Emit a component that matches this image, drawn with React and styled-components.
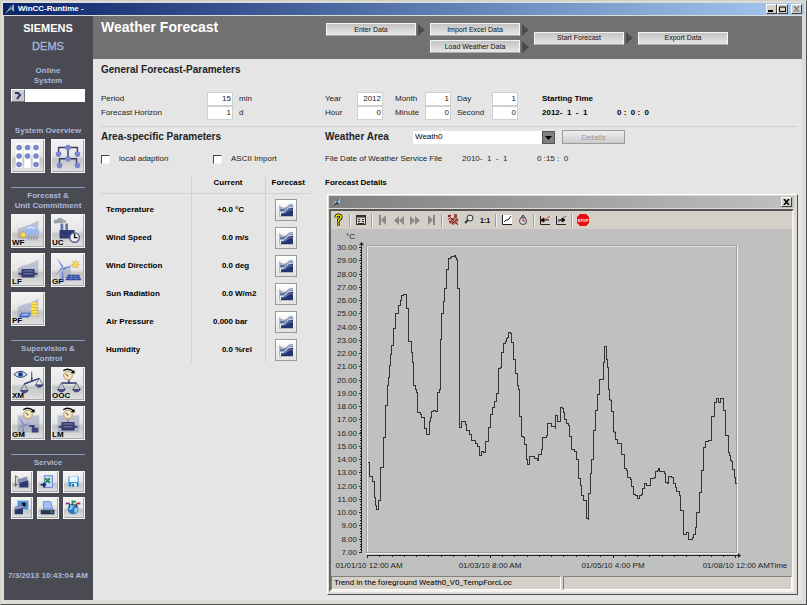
import { useState } from "react";
import styled, { createGlobalStyle } from "styled-components";

const GlobalStyle = createGlobalStyle`
  * { box-sizing: border-box; }
  body {
    margin: 0;
    background: #d4d0c8;
    color: #222;
    font: 8px/12px "Liberation Sans", Arial, sans-serif;
  }
  button, input, select { font: inherit; color: inherit; margin: 0; padding: 0; }
  h1, h2, h3, p { margin: 0; }
  svg { display: block; }
`

/* ---------- window ---------- */

const Window = styled.div`
  display: flex;
  flex-direction: column;
  min-height: 100vh;
  padding: 2px;
  border: 1px solid;
  border-color: #d4d0c8 #505050 #505050 #d4d0c8;
  background: #dedcd7;
`

const TitleBar = styled.header`
  display: flex;
  align-items: center;
  gap: 2px;
  height: 12px;
  padding: 0 2px 0 1px;
  color: #fff;
  font-weight: bold;
  background: linear-gradient(90deg, ${props => props.$from}, ${props => props.$to});
`

const TitleText = styled.span`
  flex: 1;
`

const CaptionButton = styled.button`
  display: grid;
  place-items: center;
  width: 11px;
  height: 10px;
  margin-left: ${props => props.$apart ? 1 : -2}px;
  border: 1px solid;
  border-color: #fff #404040 #404040 #fff;
  background: #d4d0c8;
  color: ${props => props.disabled ? "#808080" : "#000"};
`

const Content = styled.div`
  display: flex;
  flex: 1;
  margin: 1px 2px 2px 1px;
`

/* ---------- sidebar ---------- */

const Sidebar = styled.nav`
  display: flex;
  flex-direction: column;
  flex: none;
  width: 89px;
  padding: 5px 8px 19px 7px;
  background: #4a4a52;
  color: #a9b8dc;
  font-weight: bold;
  line-height: 10px;
  text-align: center;
`

const Brand = styled.div`
  color: #fff;
  font-size: 11px;
  font-weight: 800;
  line-height: 14px;
`

const Product = styled.div`
  margin: 4px 0 13px;
  font-size: 11px;
  font-weight: normal;
  line-height: 14px;
  -webkit-text-stroke: 0.3px #a9b8dc;
`

const StatusField = styled.div`
  display: flex;
  height: 13px;
  margin: 3px 0 24px;
`

const StatusButton = styled.button`
  width: 14px;
  border: 1px solid;
  border-color: #fff #777 #777 #fff;
  background: #c9c9ce;
`

const StatusInput = styled.input`
  flex: 1;
  min-width: 0;
  border: 0;
  background: #fff;
`

const Group = styled.section`
  padding-top: ${props => props.$ruled ? 3 : 0}px;
  border-top: ${props => props.$ruled ? "1px solid #8d9cc0" : "0"};
  margin-bottom: 14px;
`

const GroupTitle = styled.h3`
  font-size: 8px;
  margin: 0 -4px 3px;
`

const Tiles = styled.div`
  display: grid;
  grid-template-columns: repeat(auto-fill, ${props => props.$size}px);
  gap: ${props => props.$size > 30 ? "5px 6px" : "4px"};
`

const Tile = styled.button`
  position: relative;
  width: ${props => props.$size}px;
  height: ${props => props.$size}px;
  border: 1px solid #f4f4f4;
  background: linear-gradient(#f2f2f2, #e6e6e6 50%, #c4c4c4 60%, #e2e2e2);
  box-shadow: inset -1px -1px #a8a8a8;
`

const TileLabel = styled.span`
  position: absolute;
  left: 0;
  bottom: 0;
  color: #000;
  font-weight: bold;
  line-height: 8px;
`

const Clock = styled.time`
  margin: auto -6px 0;
  white-space: nowrap;
`

/* ---------- main ---------- */

const Main = styled.main`
  flex: 1;
  min-width: 0;
  background: #e5e5e5;
`

const PageHeader = styled.div`
  display: flex;
  height: 43px;
  padding: 0 8px;
  background: #727272;
`

const PageTitle = styled.h1`
  width: 225px;
  padding-top: 2px;
  color: #fff;
  font-size: 14px;
  line-height: 18px;
`

const Flow = styled.div`
  display: flex;
  align-items: flex-start;
  gap: 5px;
  padding-top: 7px;
`

const FlowStage = styled.div`
  display: flex;
  flex-direction: column;
  justify-content: ${props => props.$align || "center"};
  gap: 4px;
  height: 30px;
`

const FlowStep = styled.div`
  display: flex;
  align-items: center;
  gap: 2px;
`

const FlowButton = styled.button`
  width: 90px;
  height: 13px;
  border: 1px solid #f4f4f4;
  border-bottom-color: #aaa;
  background: linear-gradient(#c2c2c2, #e8e8e8);
  color: #111;
  font-size: 7px;
  line-height: 10px;
`

const Arrow = styled.i`
  border: 6px solid transparent;
  border-left: 7px solid #4b4b4b;
  border-right: 0;
`

const Body = styled.div`
  padding: 4px 4px 4px 8px;
`

const Heading = styled.h2`
  font-size: 10px;
  line-height: 14px;
  color: #222;
`

const Params = styled.div`
  display: flex;
  margin-top: 15px;
  padding-bottom: 6px;
  border-bottom: 1px solid #d0d0d0;
  line-height: 14px;
`

const Fields = styled.div`
  display: grid;
  grid-template-columns: ${props => props.$columns};
  grid-auto-rows: 14px;
  flex: none;
`

const NumberInput = styled.input`
  width: 26px;
  height: 14px;
  padding: 0 1px;
  border: 1px solid #cfcfcf;
  background: #fff;
  text-align: right;
`

const Unit = styled.span`
  padding-left: 6px;
`

const Starting = styled.div`
  color: #000;
  font-size: 8px;
  font-weight: bold;
  white-space: pre;
`

const Columns = styled.div`
  display: flex;
  padding-top: 3px;
`

const AreaColumn = styled.section`
  flex: none;
  width: 224px;
`

const WeatherColumn = styled.section`
  flex: 1;
  min-width: 0;
`

const Line = styled.div`
  display: flex;
  align-items: center;
  height: ${props => props.$height}px;
  margin-bottom: ${props => props.$after}px;
  white-space: pre;
`

const Check = styled.label`
  display: flex;
  align-items: center;
  gap: 9px;
  width: 112px;
`

const CheckBox = styled.input`
  appearance: none;
  width: 9px;
  height: 9px;
  border: 1px solid;
  border-color: #444 #f4f4f4 #f4f4f4 #444;
  background: #fff;
  &:checked { background: #444; }
`

const Table = styled.table`
  width: 210px;
  table-layout: fixed;
  border-collapse: collapse;
  color: #000;
  font-weight: bold;
`

const Th = styled.th`
  padding: 0 0 4px;
  border-bottom: 1px solid #d0d0d0;
  border-left: ${props => props.$ruled ? "1px solid #d0d0d0" : "0"};
`

const Td = styled.td`
  height: 28px;
  padding: 4px 0 0 ${props => props.$pad || 0}px;
  border-left: ${props => props.$ruled ? "1px solid #d0d0d0" : "0"};
  text-align: ${props => props.$align || "left"};
`

const TrendButton = styled.button`
  display: grid;
  place-items: center;
  width: 22px;
  height: 22px;
  margin-left: 9px;
  border: 1px solid #999;
  background: linear-gradient(#fff, #e2e2e2);
`

const AreaLabel = styled.label`
  width: 88px;
  font-size: 10px;
  font-weight: bold;
`

const SelectWrap = styled.div`
  display: flex;
  width: 142px;
  height: 13px;
  background: #fff;
`

const Select = styled.select`
  appearance: none;
  flex: 1;
  padding-left: 2px;
  border: 0;
  background: #fff url("data:image/svg+xml,%3Csvg xmlns='http://www.w3.org/2000/svg' width='13' height='13'%3E%3Crect x='.5' y='.5' width='12' height='12' fill='%23808080' stroke='%23555'/%3E%3Cpath d='M3 5h7l-3.5 4z'/%3E%3C/svg%3E") no-repeat right;
  color: #000;
`

const DetailsButton = styled.button`
  width: 63px;
  height: 14px;
  margin-left: 7px;
  border: 1px solid #9c9c9c;
  background: linear-gradient(#eee, #cdcdcd);
  color: #999;
  line-height: 11px;
`

const FileDate = styled.span`
  width: ${props => props.$width}px;
`

/* ---------- trend window ---------- */

const TrendWindow = styled.div`
  margin: 0 0 0 2px;
  padding: 1px 3px 2px 1px;
  border: 1px solid;
  border-color: #fff #505050 #505050 #fff;
  background: #dedbd4;
`

const Client = styled.div`
  margin-top: 1px;
  border: 2px solid;
  border-color: #555 #f4f2ec #f4f2ec #666;
  background: #d4d0c8;
`

const Toolbar = styled.div`
  display: flex;
  align-items: center;
  height: 18px;
`

const Tool = styled.button`
  display: grid;
  place-items: center;
  width: 16px;
  height: 16px;
  border: 0;
  background: none;
  color: #888;
`

const Separator = styled.i`
  width: 2px;
  height: 13px;
  margin: 0 2px;
  border-left: 1px solid #a09c94;
  border-right: 1px solid #eee;
`

const Chart = styled.svg`
  width: 100%;
  height: auto;
  background: #c0c0c0;
  font-size: 8px;
  fill: #222;
`

const StatusBar = styled.div`
  display: flex;
  gap: 2px;
  height: 14px;
  color: #000;
`

const StatusCell = styled.div`
  flex: 1;
  padding-left: 2px;
  border: 1px solid;
  border-color: #808080 #fff #fff #808080;
  font-family: Roboto, "Liberation Sans", sans-serif;
  white-space: nowrap;
`

/* ---------- icons ---------- */

const Logo = () => (
    <svg width="12" height="12" viewBox="0 0 12 12">
        <path d="M1 11L6 4L10 1V9L7 7z" fill="#9db1c0"/>
        <path d="M1 11L7 6L10 9L7 8z" fill="#1c2c3a"/>
        <path d="M10 1L7 7L6 4z" fill="#4d7086"/>
    </svg>
)

const Shade = () => <path d="M6 15L13 12L20 10L28 6V25H6z" fill="#8f96b8" opacity=".5"/>

const Gauge = () => (
    <g>
        <circle cx="17" cy="8" r="4.6" fill="#f4e6c3" stroke="#b39552"/>
        <path d="M17 9L15 6" stroke="#333"/>
        <path d="M12 3Q17 -1 23 4" fill="none" stroke="#000" strokeWidth="1.5"/>
        <path d="M24 2V6L20 5z"/>
    </g>
)

const Scales = ({ tilt = 0 }) => (
    <g fill="none" stroke="#323a70">
        <path d={`M10 ${16 + tilt}L26 ${16 - tilt}M18 12V17`} strokeWidth="1.5"/>
        <path d={`M10 ${16 + tilt}L6 ${23 + tilt}M10 ${16 + tilt}L14 ${23 + tilt}M26 ${16 - tilt}L22 ${23 - tilt}M26 ${16 - tilt}L30 ${23 - tilt}`} strokeWidth=".7"/>
        <path d={`M6 ${23 + tilt}H14Q10 ${28 + tilt} 6 ${23 + tilt}M22 ${23 - tilt}H30Q26 ${28 - tilt} 22 ${23 - tilt}`} fill="#4b558f"/>
    </g>
)

const Motor = () => (
    <g fill="#343b6c">
        <rect x="7" y="20" width="20" height="2"/>
        <rect x="10" y="16" width="14" height="9" rx="1"/>
        <path d="M12 18H22M12 21H22" stroke="#8087b2"/>
    </g>
)

const Sun = ({ x, y }) => (
    <g transform={`translate(${x} ${y})`}>
        <path d="M0-5L1-2L4-4L2-1L5 0L2 1L4 4L1 2L0 5L-1 2L-4 4L-2 1L-5 0L-2-1L-4-4L-1-2z" fill="#e69a1c"/>
        <circle r="2.5" fill="#ffdc4a"/>
    </g>
)

const Mill = ({ color }) => (
    <path d="M11 15L10 30H13zM11 15L5 4L12 13zM11 15L22 12L12 17zM11 15L3 24L10 14z" fill={color}/>
)

const bigIcons = {
    list: <g>
        <rect x="4" y="3" width="7" height="27" fill="#fff"/>
        <rect x="13" y="3" width="7" height="27" fill="#fff"/>
        <rect x="22" y="3" width="7" height="27" fill="#fff"/>
        {[7.5, 16.5, 25.5].map(x => [8, 17, 26].map(y =>
            x === 16.5 && y === 26 ? null : <circle key={`${x}-${y}`} cx={x} cy={y} r="3" fill="#7c86cc"/>
        ))}
    </g>,
    net: <g>
        <path d="M17 8H7V15M17 8H27V15M17 8V20M17 20H8V26M17 20H26V26" fill="none" stroke="#343a66" strokeWidth="1.5"/>
        {[[17, 8], [7, 15], [27, 15], [17, 20], [8, 27], [27, 27]].map(([x, y]) =>
            <circle key={`${x}-${y}`} cx={x} cy={y} r="3" fill="#7c86cc"/>
        )}
    </g>,
    WF: <g>
        <Shade/>
        <Sun x={12} y={21}/>
        <path d="M16 21a3 3 0 0 1 0-6a4 4 0 0 1 9 0h1a3 3 0 0 1 0 6z" fill="#9db6ee"/>
        <path d="M17 15a4 4 0 0 1 7 0" fill="none" stroke="#dce6fb" strokeWidth="2"/>
        <path d="M18 23l-1 4M21 23l-1 4M24 23l-1 4M27 23l-1 4" stroke="#6a7191" strokeWidth=".7"/>
    </g>,
    UC: <g>
        <path d="M3 9a2 2 0 0 1 2-4a4 4 0 0 1 7 0q3 0 3 3z" fill="#9aa3a6"/>
        <path d="M9 17V9H12V17M14 17V9H17V17" fill="#6b74a8"/>
        <path d="M8 16H24V25H8z" fill="#30386e"/>
        <circle cx="24" cy="24" r="5" fill="#eee" stroke="#56608c" strokeWidth="1.5"/>
        <path d="M24 20V24H27" fill="none" stroke="#111" strokeWidth="1.5"/>
    </g>,
    LF: <g><Shade/><Motor/></g>,
    GF: <g>
        <path d="M8 16L20 12V26H8z" fill="#a2a6c0" opacity=".6"/>
        <Sun x={25} y={11}/>
        <Mill color="#6482d6"/>
        <path d="M17 22H29L31 28H14z" fill="#2c469e"/>
        <path d="M16 24H30M15 26H31M21 22L20 28M25 22L26 28" stroke="#7d94d8" strokeWidth=".6"/>
    </g>,
    PF: <g>
        <Shade/>
        <path d="M21 10h5v12h-5z" fill="#d9b91f"/>
        <path d="M20 11h6M21 14h6M20 17h6M21 20h6M21 23h6" stroke="#ffe55a" strokeWidth="2"/>
        <path d="M10 21H20L18 26H7z" fill="#4468c4"/>
        <path d="M11 22H18L17 24H10z" fill="#a9c0f2"/>
    </g>,
    XM: <g>
        <path d="M2 7Q9 0 16 7Q9 13 2 7z" fill="#e8f0f8" stroke="#26305a"/>
        <circle cx="9" cy="7" r="3" fill="#4a7cc4"/>
        <circle cx="9" cy="7" r="1.5" fill="#10183c"/>
        <path d="M21 4V11" stroke="#323a70"/>
        <g transform="translate(3 -2)"><Scales tilt={3}/></g>
    </g>,
    OOC: <g><Scales/><Gauge/></g>,
    GM: <g>
        <path d="M6 9H29V27H6z" fill="#8f96b8" opacity=".5"/>
        <g transform="translate(3 7) scale(.8)"><Mill color="#6b7cc0"/></g>
        <path d="M18 19H24V22H28V27H21V21H18z" fill="#39427e"/>
        <Gauge/>
    </g>,
    LM: <g>
        <path d="M6 9H29V27H6z" fill="#8f96b8" opacity=".5"/>
        <Gauge/>
        <path d="M17 13V18" stroke="#56608c"/>
        <Motor/>
    </g>,
}

const smallIcons = {
    trendOut: <g>
        <path d="M4 4V16M2 14H7M4 4L7 7" fill="none" stroke="#555"/>
        <path d="M6 8L17 5V12H6z" fill="#8790ad"/>
        <path d="M8 12L18 9V17H8z" fill="#2c3970"/>
    </g>,
    excel: <g>
        <path d="M7 4H16V17H7z" fill="#c4d5fa" stroke="#6883ca"/>
        <path d="M8 7L13 12M13 7L8 12" stroke="#1e8a3c" strokeWidth="2"/>
        <path d="M3 14H8M6 12L8 14L6 17" fill="none" stroke="#1b2d7a" strokeWidth="2"/>
    </g>,
    save: <g>
        <path d="M5 5H16V16H5z" fill="#2488cf"/>
        <rect x="6" y="5" width="9" height="6" fill="#e9f7ff"/>
        <rect x="8" y="12" width="6" height="4" fill="#d8eef9"/>
        <rect x="9" y="13" width="2" height="3" fill="#195c94"/>
    </g>,
    screen: <g>
        <rect x="6" y="3" width="12" height="10" fill="#4a8ed2" stroke="#b5cbe4"/>
        <path d="M10 10L14 6M11 6H14V9" fill="none" stroke="#000" strokeWidth="1.5"/>
        <path d="M3 10L12 8V18H3z" fill="#283468"/>
        <path d="M3 10L12 8V11L3 13z" fill="#8d96b4"/>
    </g>,
    print: <g>
        <path d="M6 4H14L16 12H6z" fill="#aabffa" stroke="#6f8ad8"/>
        <path d="M3 13H18V18H3z" fill="#28334e"/>
        <path d="M4 13H17" stroke="#8190aa"/>
        <rect x="14" y="15" width="2" height="1" fill="#6be0ff"/>
    </g>,
    globe: <g>
        <circle cx="10" cy="12" r="6" fill="#2a79bd"/>
        <path d="M5 10Q8 6 11 8L9 12L6 13zM11 12L15 10V14L12 17z" fill="#8bd3f0"/>
        <path d="M6 6V11M9 3V9M14 6V10" stroke="#222"/>
        <rect x="2" y="5" width="4" height="2" fill="#7a2ca4"/>
        <rect x="9" y="3" width="4" height="2" fill="#1c8c40"/>
        <rect x="14" y="5" width="4" height="2" fill="#d8252a"/>
    </g>,
}

const ForecastIcon = () => (
    <svg width="16" height="16" viewBox="0 0 16 16">
        <path d="M1.5 3V14.5H15" fill="none" stroke="#b4b9c8"/>
        <path d="M2 4Q6 7 9 4T15 2V9H2z" fill="#a3aecb"/>
        <path d="M2 7Q6 8 9 6T15 4V10H2z" fill="#5c6b9c"/>
        <path d="M3 11L8 10L11 7L15 6V14H3z" fill="#24346f"/>
        <path d="M2 10Q6 11 8 8T15 5" fill="none" stroke="#e8ecf6"/>
        <path d="M3 12Q8 11 10 9T15 8" fill="none" stroke="#8c98c0" strokeWidth=".7"/>
    </svg>
)

const toolIcons = {
    help: <g fill="none">
        <path d="M4 5V4Q4 2 6.500 2T9 4Q9 6 6.500 7V9M5 11H8" stroke="#000" strokeWidth="3"/>
        <path d="M4 5V4Q4 2 6.500 2T9 4Q9 6 6.500 7V9M5.500 11H7.500" stroke="#f5e800" strokeWidth="1.5"/>
    </g>,
    table: <g>
        <rect x="2.5" y="2.5" width="9" height="9" fill="#d4d0c8" stroke="#333"/>
        <path d="M2 3.5H12" stroke="#333" strokeWidth="2"/>
        <path d="M4 6.5H6M8 6.5H10M4 8.5H6M8 8.5H10M4 10.5H10" stroke="#333"/>
    </g>,
    first: <path d="M3 2H5V12H3zM10 2V12L5 7z"/>,
    back: <path d="M7 3V12L2 7.500zM12 3V12L7 7.500z"/>,
    next: <path d="M2 3V12L7 7.500zM7 3V12L12 7.500z"/>,
    last: <path d="M9 2H11V12H9zM4 2V12L9 7z"/>,
    range: <g fill="none" stroke="#8c1d1d">
        <path d="M2 2L12 12M2 6H12M4 10H12M7 5V12"/>
        <path d="M2 4L5 2M8 2H11M8 4H11M9 8L12 7M3 9L6 8" strokeWidth="1.5"/>
    </g>,
    zoom: <g fill="none" stroke="#333">
        <circle cx="8" cy="5" r="3" fill="#d3e3e1"/>
        <path d="M6 7L3 10" strokeWidth="2"/>
    </g>,
    scale: <text x="2" y="10" fontSize="7" fontWeight="bold" fill="#000">1:1</text>,
    trend: <g>
        <rect x="2" y="2" width="10" height="10" fill="#fff"/>
        <path d="M2.5 2V11.500H12M4 9L6 7H8L11 3" fill="none" stroke="#222"/>
    </g>,
    time: <g fill="none" stroke="#444">
        <circle cx="7" cy="8" r="3.5" fill="#dcd5e4"/>
        <path d="M5 5L7 2L9 5" stroke="#333"/>
        <path d="M7 6V8H9" stroke="#a12525"/>
    </g>,
    red: <g fill="none">
        <path d="M2.5 3V11.500H12" stroke="#222"/>
        <path d="M8 6L12 3" stroke="#d22"/>
        <path d="M6 5V9L3 7zM6 7H11" stroke="#111" fill="#111"/>
        <path d="M3 9L5 8" stroke="#d22"/>
    </g>,
    blue: <g fill="none">
        <path d="M2.500 3V11.500H12" stroke="#222"/>
        <path d="M4 9L12 3" stroke="#3458a4"/>
        <path d="M8 5V9L11 7zM4 7H8" stroke="#111" fill="#111"/>
    </g>,
    stop: <g>
        <path d="M4 1H10L13 4V10L10 13H4L1 10V4z" fill="#e80c0c"/>
        <text x="7" y="9" fontSize="4" fontWeight="bold" textAnchor="middle" fill="#fff">STOP</text>
    </g>,
}

const toolGroups = [
    ["help"],
    ["table"],
    ["first", "back", "next", "last"],
    ["range", "zoom", "scale"],
    ["trend", "time"],
    ["red", "blue"],
    ["stop"],
]

/* ---------- data ---------- */

const groups = [
    { title: ["System Overview"], size: 34, icons: ["list", "net"] },
    { title: ["Forecast &", "Unit Commitment"], size: 34, ruled: true, icons: ["WF", "UC", "LF", "GF", "PF"] },
    { title: ["Supervision &", "Control"], size: 34, ruled: true, icons: ["XM", "OOC", "GM", "LM"] },
    { title: ["Service"], size: 22, ruled: true, icons: ["trendOut", "excel", "save", "screen", "print", "globe"] },
]

const parameters = [
    ["Temperature", "+0.0", "°C"],
    ["Wind Speed", "0.0", "m/s"],
    ["Wind Direction", "0.0", "deg"],
    ["Sun Radiation", "0.0", "W/m2"],
    ["Air Pressure", "0.000", "bar"],
    ["Humidity", "0.0", "%rel"],
]

// temperature curve as x,y pairs, three units to one chart pixel
const trend = `127,819 132,862 138,862 142,878 147,925 152,950 154,960 158,960 160,933 166,834 172,834 174,745
178,745 180,650 184,650 187,588 190,565 193,528 197,495 200,468 204,450 206,418 212,374 217,374 221,350 226,335
229,318 235,316 243,318 245,357 251,457 257,457 259,490 262,520 266,590 271,600 273,610 278,670 285,675 290,685
297,690 299,718 304,724 305,735 310,735 312,698 317,685 320,668 325,664 332,667 337,610 343,600 345,450 350,372
354,370 356,337 358,298 363,296 364,242 369,240 371,208 376,205 380,202 388,199 390,205 394,212 396,253 397,298
401,298 403,510 404,715 409,698 416,698 420,705 425,725 432,737 438,753 446,753 450,763 458,772 462,798 467,798
469,787 475,790 480,788 482,757 489,715 495,675 502,655 508,637 515,613 520,597 521,537 526,535 529,490 535,463
541,458 543,447 548,445 550,430 556,433 560,460 566,510 572,552 577,590 581,600 582,683 588,742 594,745 598,765
603,785 605,810 608,825 612,827 614,803 620,803 627,808 638,815 641,795 648,780 653,745 664,740 666,703 674,703
680,712 690,718 692,680 698,697 704,697 706,655 712,657 714,670 718,690 724,703 730,710 733,742 738,765 740,780
748,787 754,810 759,817 761,868 766,890 770,920 775,935 784,938 785,988 790,990 791,912 796,900 797,852 800,810
804,800 806,725 812,665 818,615 823,572 829,570 835,565 835,520 838,472 844,472 845,510 846,535 851,600 852,630
857,635 859,667 864,728 869,730 871,752 876,755 878,762 889,763 890,795 897,838 905,845 908,865 915,870 918,893
925,915 932,918 938,928 942,918 949,915 951,898 959,882 965,890 975,885 977,868 988,865 990,848 998,845 999,838
1004,848 1017,852 1022,872 1022,880 1027,882 1029,862 1038,865 1045,882 1052,895 1055,908 1062,920 1067,965
1073,965 1074,1037 1080,1037 1083,1030 1087,1030 1089,1052 1095,1050 1103,1045 1106,1035 1110,1015 1115,970
1122,910 1128,845 1134,775 1140,770 1142,758 1150,755 1159,755 1160,682 1167,640 1173,635 1175,628 1180,640
1185,640 1187,628 1192,628 1194,665 1200,668 1202,738 1207,740 1209,790 1214,800 1215,815 1220,817 1222,840
1227,843 1229,865 1231,882 1235,882`

const trendPath = trend.split(/\s+/).map((pair, index) => {
    const [x, y] = pair.split(",").map(Number)
    const px = Math.floor(x / 3) - 5.5
    const py = Math.floor(y / 3) - 39.5
    return index ? `H${px}V${py}` : `M${px} ${py}`
}).join("")

const timeLabels = [
    [38, "01/01/10 12:00 AM"],
    [159, "01/03/10 8:00 AM"],
    [282, "01/05/10 4:00 PM"],
    [414, "01/08/10 12:00 AMTime"],
]

/* ---------- parts ---------- */

const MenuGroup = ({ group }) => (
    <Group $ruled={group.ruled}>
        <GroupTitle>{group.title.map(line => <div key={line}>{line}</div>)}</GroupTitle>
        <Tiles $size={group.size}>
            {group.icons.map(name =>
                <Tile key={name} $size={group.size} aria-label={name}>
                    <svg width="100%" height="100%" viewBox={group.size > 30 ? "0 0 34 34" : "0 0 22 22"}>
                        {bigIcons[name] || smallIcons[name]}
                    </svg>
                    {name === name.toUpperCase() && <TileLabel>{name}</TileLabel>}
                </Tile>
            )}
        </Tiles>
    </Group>
)

const Field = ({ label, value, unit }) => {
    const id = label.toLowerCase().replace(" ", "-")
    return (
        <>
            <label htmlFor={id}>{label}</label>
            <NumberInput id={id} defaultValue={value}/>
            <Unit>{unit}</Unit>
        </>
    )
}

const Close = () => (
    <svg width="7" height="6" viewBox="0 0 7 6">
        <path d="M1 0L6 6M6 0L1 6" stroke="currentColor" strokeWidth="1.5"/>
    </svg>
)

const ParameterTable = () => (
    <Table>
        <colgroup>
            <col width="90"/>
            <col width="42"/>
            <col width="32"/>
            <col width="46"/>
        </colgroup>
        <thead>
            <tr>
                <Th/>
                <Th $ruled colSpan={2}>Current</Th>
                <Th $ruled>Forecast</Th>
            </tr>
        </thead>
        <tbody>
            {parameters.map(([name, value, unit]) =>
                <tr key={name}>
                    <Td $pad={5}>{name}</Td>
                    <Td $ruled $align="right">{value}</Td>
                    <Td $pad={2}>{unit}</Td>
                    <Td $ruled><TrendButton aria-label={`${name} forecast`}><ForecastIcon/></TrendButton></Td>
                </tr>
            )}
        </tbody>
    </Table>
)

const TrendChart = () => (
    <Chart viewBox="0 0 461 347">
        <g fill="none" shapeRendering="crispEdges">
            <path d="M35.5 324.5V16.5H406" stroke="#a2a2a2"/>
            <path d="M36.5 324V17.5H405" stroke="#e4e4e4"/>
            <path d="M405.5 17V323.5H36" stroke="#a2a2a2"/>
            <path d="M406.5 16V324.5H35" stroke="#eee"/>
            <path d="M30.5 14V323M36 326.5H409" stroke="#222"/>
            <path d="M29.5 18V323" stroke="#222" strokeDasharray="1 1.65"/>
            {Array.from({ length: 24 }, (_, i) =>
                <path key={i} d={`M28 ${Math.round(18 + i * 13.25)}.5H31`} stroke="#222"/>
            )}
            {Array.from({ length: 31 }, (_, i) =>
                <path key={i} d={`M${Math.round(36 + i * 12.28)}.5 326V${i % 10 ? 328 : 329}`} stroke="#222"/>
            )}
            <path d={trendPath} stroke="#333"/>
        </g>
        <path d="M30.5 13L33 16H28zM410 326.5L407 324V329z"/>
        <text x="15" y="10">°C</text>
        {Array.from({ length: 24 }, (_, i) =>
            <text key={i} x="26" y={Math.round(21 + i * 13.25)} textAnchor="end">{(30 - i).toFixed(2)}</text>
        )}
        {timeLabels.map(([x, label]) =>
            <text key={label} x={x} y="339" textAnchor="middle">{label}</text>
        )}
    </Chart>
)

const Trend = () => (
    <TrendWindow>
        <TitleBar $from="#808080" $to="#c0c0c0">
            <Logo/>
            <TitleText/>
            <CaptionButton $apart aria-label="Close trend"><Close/></CaptionButton>
        </TitleBar>
        <Client>
            <Toolbar>
                {toolGroups.map((group, index) => [
                    index > 0 && <Separator key={`separator-${index}`}/>,
                    ...group.map(name =>
                        <Tool key={name} aria-label={name}>
                            <svg width="14" height="14" viewBox="0 0 14 14" fill="currentColor">
                                {toolIcons[name]}
                            </svg>
                        </Tool>
                    ),
                ])}
            </Toolbar>
            <TrendChart/>
            <StatusBar>
                <StatusCell>Trend in the foreground Weath0_V0_TempForcLoc</StatusCell>
                <StatusCell/>
            </StatusBar>
        </Client>
    </TrendWindow>
)

const App = () => {
    const [area, setArea] = useState("Weath0")

    return (
        <Window>
            <GlobalStyle/>
            <TitleBar $from="#0a246a" $to="#a6caf0">
                <Logo/>
                <TitleText>WinCC-Runtime -</TitleText>
                <CaptionButton aria-label="Minimize">
                    <svg width="7" height="6"><path d="M0 5H5" stroke="#000" strokeWidth="2"/></svg>
                </CaptionButton>
                <CaptionButton aria-label="Maximize">
                    <svg width="7" height="6"><path d="M.5 1H6.500V5.500H.5z" fill="none" stroke="#000"/></svg>
                </CaptionButton>
                <CaptionButton $apart disabled aria-label="Close"><Close/></CaptionButton>
            </TitleBar>
            <Content>
                <Sidebar>
                    <Brand>SIEMENS</Brand>
                    <Product>DEMS</Product>
                    <label htmlFor="status">Online<br/>System</label>
                    <StatusField>
                        <StatusButton aria-label="Acknowledge">
                            <svg width="12" height="11" viewBox="0 0 12 11">
                                <path d="M3 3H6L8 5L5 9" fill="none" stroke="#27346a" strokeWidth="2"/>
                            </svg>
                        </StatusButton>
                        <StatusInput id="status"/>
                    </StatusField>
                    {groups.map(group => <MenuGroup key={group.title[0]} group={group}/>)}
                    <Clock>7/3/2013 10:43:04 AM</Clock>
                </Sidebar>
                <Main>
                    <PageHeader>
                        <PageTitle>Weather Forecast</PageTitle>
                        <Flow>
                            <FlowStage $align="flex-start">
                                <FlowStep><FlowButton>Enter Data</FlowButton><Arrow/></FlowStep>
                            </FlowStage>
                            <FlowStage>
                                <FlowStep><FlowButton>Import Excel Data</FlowButton><Arrow/></FlowStep>
                                <FlowStep><FlowButton>Load Weather Data</FlowButton><Arrow/></FlowStep>
                            </FlowStage>
                            <FlowStage>
                                <FlowStep><FlowButton>Start Forecast</FlowButton><Arrow/></FlowStep>
                            </FlowStage>
                            <FlowStage>
                                <FlowButton>Export Data</FlowButton>
                            </FlowStage>
                        </Flow>
                    </PageHeader>
                    <Body>
                        <Heading>General Forecast-Parameters</Heading>
                        <Params>
                            <Fields $columns="106px 26px 92px">
                                <Field label="Period" value="15" unit="min"/>
                                <Field label="Forecast Horizon" value="1" unit="d"/>
                            </Fields>
                            <Fields $columns="32px 26px 12px 30px 26px 6px 35px 26px 24px">
                                <Field label="Year" value="2012"/>
                                <Field label="Month" value="1"/>
                                <Field label="Day" value="1"/>
                                <Field label="Hour" value="0"/>
                                <Field label="Minute" value="0"/>
                                <Field label="Second" value="0"/>
                            </Fields>
                            <Starting>
                                <div>Starting Time</div>
                                <Line $height={14} $after={0}>
                                    <FileDate $width={75}>2012-  1  -  1</FileDate>
                                    <span>0 :  0 :  0</span>
                                </Line>
                            </Starting>
                        </Params>
                        <Columns>
                            <AreaColumn>
                                <Line $height={14} $after={9}><Heading>Area-specific Parameters</Heading></Line>
                                <Line $height={12} $after={12}>
                                    <Check><CheckBox type="checkbox"/>local adaption</Check>
                                    <Check><CheckBox type="checkbox"/>ASCII Import</Check>
                                </Line>
                                <ParameterTable/>
                            </AreaColumn>
                            <WeatherColumn>
                                <Line $height={14} $after={9}>
                                    <AreaLabel htmlFor="area">Weather Area</AreaLabel>
                                    <SelectWrap>
                                        <Select id="area" value={area} onChange={event => setArea(event.target.value)}>
                                            <option>Weath0</option>
                                        </Select>
                                    </SelectWrap>
                                    <DetailsButton disabled>Details</DetailsButton>
                                </Line>
                                <Line $height={12} $after={12}>
                                    <FileDate $width={137}>File Date of Weather Service File</FileDate>
                                    <FileDate $width={75}>2010-  1  -  1</FileDate>
                                    <span>0 :15 :  0</span>
                                </Line>
                                <Line $height={12} $after={5}><Starting as="h3">Forecast Details</Starting></Line>
                                <Trend/>
                            </WeatherColumn>
                        </Columns>
                    </Body>
                </Main>
            </Content>
        </Window>
    )
}

export default App
